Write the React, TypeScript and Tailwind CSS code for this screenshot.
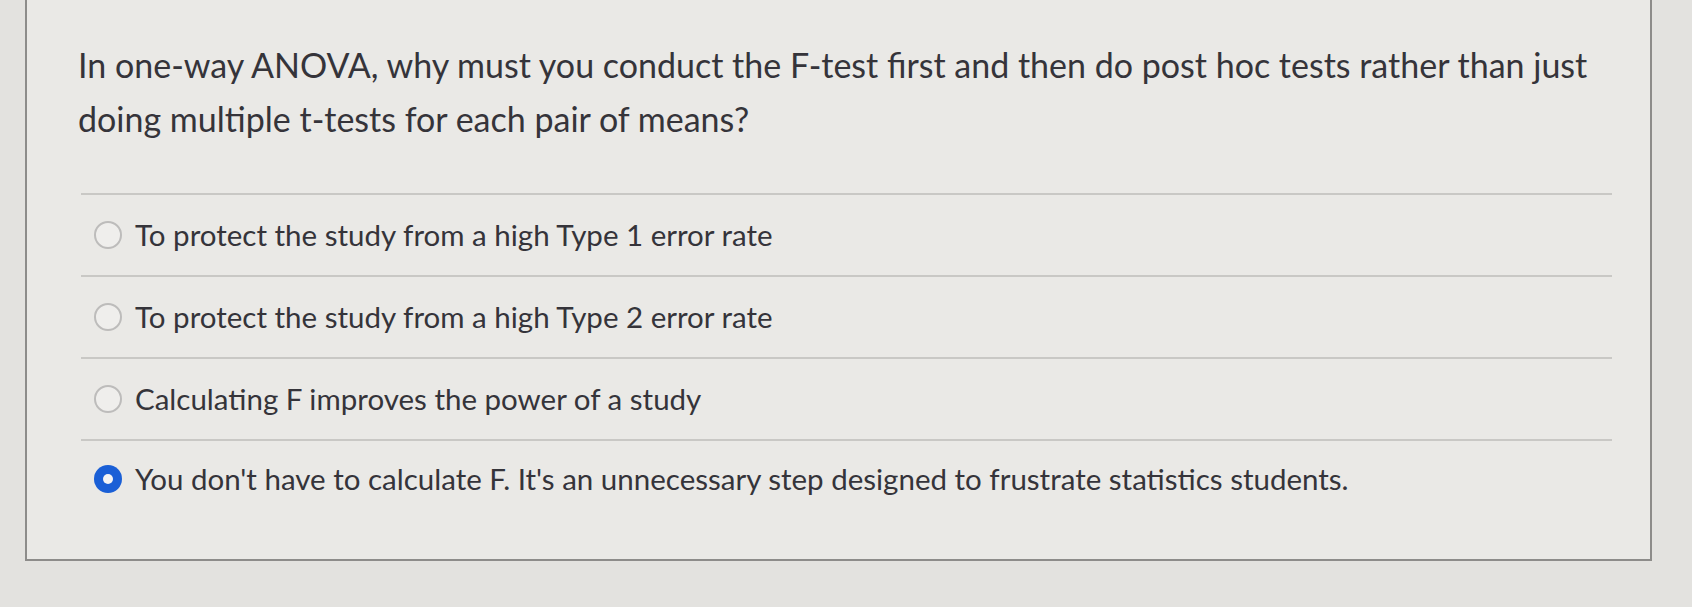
import React from "react";

const options = [
  { text: "To protect the study from a high Type 1 error rate", selected: false },
  { text: "To protect the study from a high Type 2 error rate", selected: false },
  { text: "Calculating F improves the power of a study", selected: false },
  {
    text: "You don't have to calculate F. It's an unnecessary step designed to frustrate statistics students.",
    selected: true,
  },
];

function Radio({ selected }: { selected: boolean }) {
  if (selected) {
    return (
      <span className="flex h-[28px] w-[28px] shrink-0 items-center justify-center rounded-full bg-[#1a5fd6]">
        <span className="h-[10px] w-[10px] rounded-full bg-[#f4f4f4]" />
      </span>
    );
  }
  return (
    <span className="h-[28px] w-[28px] shrink-0 rounded-full border-2 border-[#bdbcbb] bg-[#efeeec]" />
  );
}

export default function App() {
  return (
    <div
      className="h-[607px] w-full overflow-hidden bg-[#e3e2df]"
      style={{ fontFamily: "Lato, 'Noto Sans', sans-serif" }}
    >
      <div className="ml-[25px] h-[561px] w-[1627px] border-x-2 border-b-2 border-[#8d8c8a] bg-[#eae9e6]">
        <div className="w-[1580px] pl-[51px] pt-[38px] text-[34px] leading-[54px] text-[#35343a]">
          In one-way ANOVA, why must you conduct the F-test first and then do post hoc tests rather than just
          doing multiple t-tests for each pair of means?
        </div>
        <div className="ml-[54px] mr-[38px] mt-[47px]">
          {options.map((o, i) => (
            <div
              key={i}
              className={
                "flex items-center gap-[13px] border-t-2 border-[#c9c8c5] pl-[13px] text-[29.5px] text-[#35343a] " +
                (i === 3 ? "h-[78px]" : "h-[82px]")
              }
            >
              <Radio selected={o.selected} />
              <span>{o.text}</span>
            </div>
          ))}
        </div>
      </div>
    </div>
  );
}
